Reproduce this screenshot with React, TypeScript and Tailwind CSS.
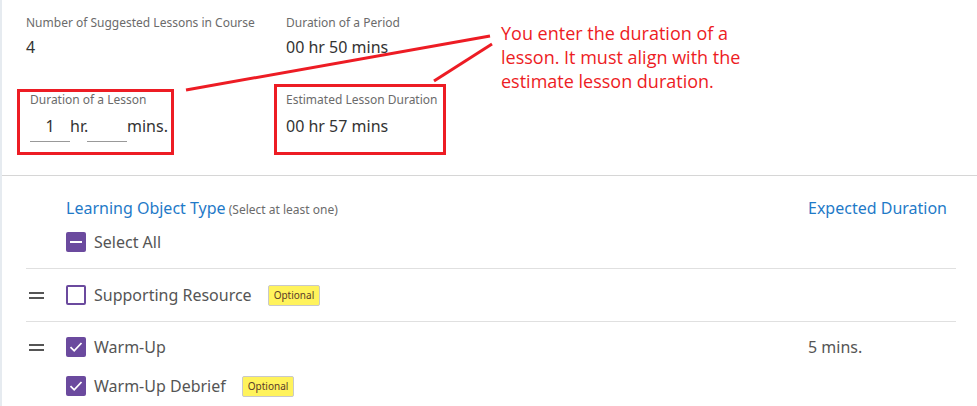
import React from 'react';

const font = { fontFamily: '"Noto Sans", Lato, sans-serif' };

const Check = ({ state }: { state: 'on' | 'off' | 'some' }) => {
    if (state === 'off') {
        return <span className="w-5 h-5 rounded-[2px] border-2 border-[#6b4a9e] bg-white shrink-0" />;
    }
    return (
        <span className="w-5 h-5 rounded-[2px] bg-[#6b4a9e] flex items-center justify-center shrink-0">
            {state === 'on' ? (
                <svg width="16" height="16" viewBox="0 0 16 16">
                    <path d="M2.5 8.2 L6.2 11.8 L13.5 4" stroke="white" strokeWidth="1.8" fill="none" />
                </svg>
            ) : (
                <span className="w-3 h-[2px] bg-white" />
            )}
        </span>
    );
};

const Optional = () => (
    <span className="ml-4 px-[5px] h-[21px] flex items-center text-[10px] text-[#5a3a2a] bg-[#fff35c] border border-[#c9c9c9] rounded-[2px]">
        Optional
    </span>
);

const Handle = () => (
    <span className="w-[40px] flex flex-col gap-[3px] pl-[3px] shrink-0">
        <span className="w-[15px] h-[2px] bg-[#555]" />
        <span className="w-[15px] h-[2px] bg-[#555]" />
    </span>
);

export default function App() {
    return (
        <div className="relative w-[977px] h-[406px] bg-white overflow-hidden border-l-2 border-[#e6ebf0]" style={font}>
            {/* top fields */}
            <div className="pl-[24px] pt-[15px] h-[175px]">
                <div className="flex">
                    <div className="w-[260px]">
                        <div className="text-[12px] leading-4 text-[#6b6b6b]">Number of Suggested Lessons in Course</div>
                        <div className="mt-[6px] text-[16px] leading-5 text-[#333]">4</div>
                    </div>
                    <div>
                        <div className="text-[12px] leading-4 text-[#6b6b6b]">Duration of a Period</div>
                        <div className="mt-[6px] text-[16px] leading-5 text-[#333]">00 hr 50 mins</div>
                    </div>
                </div>
                <div className="flex mt-[35px]">
                    <div className="w-[260px] pl-[4px]">
                        <div className="text-[12px] leading-4 text-[#6b6b6b]">Duration of a Lesson</div>
                        <div className="mt-[6px] flex items-start text-[16px] leading-5 text-[#333]">
                            <span className="w-[40px] h-[28px] pt-[2px] border-b border-[#999] text-center">1</span>
                            <span className="w-[17px] pt-[2px]">hr.</span>
                            <span className="w-[40px] h-[28px] border-b border-[#999]" />
                            <span className="pt-[2px]">mins.</span>
                        </div>
                    </div>
                    <div>
                        <div className="text-[12px] leading-4 text-[#6b6b6b]">Estimated Lesson Duration</div>
                        <div className="mt-[8px] text-[16px] leading-5 text-[#333]">00 hr 57 mins</div>
                    </div>
                </div>
            </div>
            <div className="h-px bg-[#d6d6d6]" />

            {/* learning objects */}
            <div className="pl-[24px] pr-[21px]">
                <div className="flex items-baseline justify-between pl-[40px] pt-[21px] leading-[22px]">
                    <div className="leading-[22px]">
                        <span className="text-[16px] text-[#1f7ac8]">Learning Object Type</span>
                        <span className="text-[12px] text-[#6b6b6b]"> (Select at least one)</span>
                    </div>
                    <span className="text-[16px] text-[#1f7ac8] w-[138px] mr-[10px] whitespace-nowrap">Expected Duration</span>
                </div>
                <div className="flex items-center pl-[40px] mt-[11px] h-[20px]">
                    <Check state="some" />
                    <span className="ml-2 text-[16px] text-[#555]">Select All</span>
                </div>
                <div className="h-px bg-[#e0e0e0] mt-[16px]" />
                <div className="flex items-center h-[52px]">
                    <Handle />
                    <Check state="off" />
                    <span className="ml-2 text-[16px] text-[#555]">Supporting Resource</span>
                    <Optional />
                </div>
                <div className="h-px bg-[#e0e0e0]" />
                <div className="flex items-center h-[20px] mt-[15px]">
                    <Handle />
                    <Check state="on" />
                    <span className="ml-2 text-[16px] text-[#555]">Warm-Up</span>
                    <span className="ml-auto w-[138px] mr-[10px] text-[16px] text-[#555]">5 mins.</span>
                </div>
                <div className="flex items-center h-[20px] mt-[19px] pl-[40px]">
                    <Check state="on" />
                    <span className="ml-2 text-[16px] text-[#555]">Warm-Up Debrief</span>
                    <Optional />
                </div>
            </div>

            {/* annotation overlay */}
            <div className="absolute left-[15px] top-[89px] w-[157px] h-[66px] border-[3px] border-[#ed1c24]" />
            <div className="absolute left-[272px] top-[84px] w-[172px] h-[71px] border-[3px] border-[#ed1c24]" />
            <svg className="absolute left-0 top-0" width="977" height="406">
                <line x1="184" y1="90" x2="488" y2="36" stroke="#ed1c24" strokeWidth="3" />
                <line x1="432" y1="81" x2="490" y2="44" stroke="#ed1c24" strokeWidth="3" />
            </svg>
            <div className="absolute left-[499px] top-[21px] text-[18px] leading-[24px] text-[#ed1c24]" style={{ fontFamily: '"Open Sans", "Noto Sans", sans-serif' }}>
                You enter the duration of a<br />
                lesson. It must align with the<br />
                estimate lesson duration.
            </div>
        </div>
    );
}
